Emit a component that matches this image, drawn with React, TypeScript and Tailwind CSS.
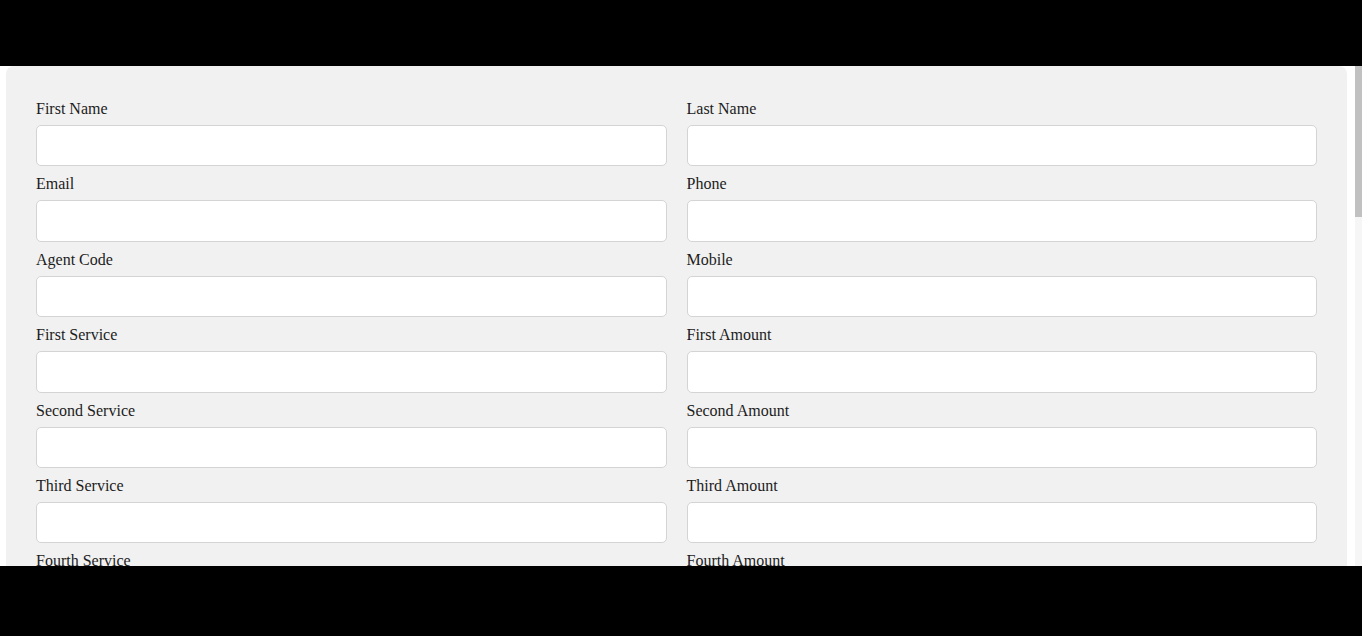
import React from "react";

const rows: [string, string][] = [
  ["First Name", "Last Name"],
  ["Email", "Phone"],
  ["Agent Code", "Mobile"],
  ["First Service", "First Amount"],
  ["Second Service", "Second Amount"],
  ["Third Service", "Third Amount"],
  ["Fourth Service", "Fourth Amount"],
];

function Field({ label }: { label: string }) {
  return (
    <div className="flex flex-col">
      <label className="block h-[24px] text-[16px] leading-[24px] text-[#1c1c1c]">{label}</label>
      <input
        type="text"
        className="mt-[4px] mb-[6px] h-[41.4px] w-full rounded-[5px] border border-[#d4d4d4] bg-white px-2 outline-none"
      />
    </div>
  );
}

export default function App() {
  return (
    <div
      className="flex h-[636px] w-[1362px] flex-col bg-black"
      style={{ fontFamily: '"Liberation Serif", "Times New Roman", serif' }}
    >
      <div className="h-[66px] flex-none bg-black" />
      <div className="flex h-[500px] flex-none overflow-hidden bg-white">
        <div className="ml-[6px] w-[1341px] flex-none rounded-t-[8px] bg-[#f1f1f1] px-[30px] pt-[31px]">
          <div className="grid grid-cols-2 gap-x-[20px]">
            {rows.map(([a, b]) => (
              <React.Fragment key={a}>
                <Field label={a} />
                <Field label={b} />
              </React.Fragment>
            ))}
          </div>
        </div>
        <div className="w-[8px] flex-none" />
        <div className="w-[7px] flex-none bg-[#f6f6f6]">
          <div className="h-[151px] w-full bg-[#c1c1c1]" />
        </div>
      </div>
      <div className="h-[70px] flex-none bg-black" />
    </div>
  );
}
